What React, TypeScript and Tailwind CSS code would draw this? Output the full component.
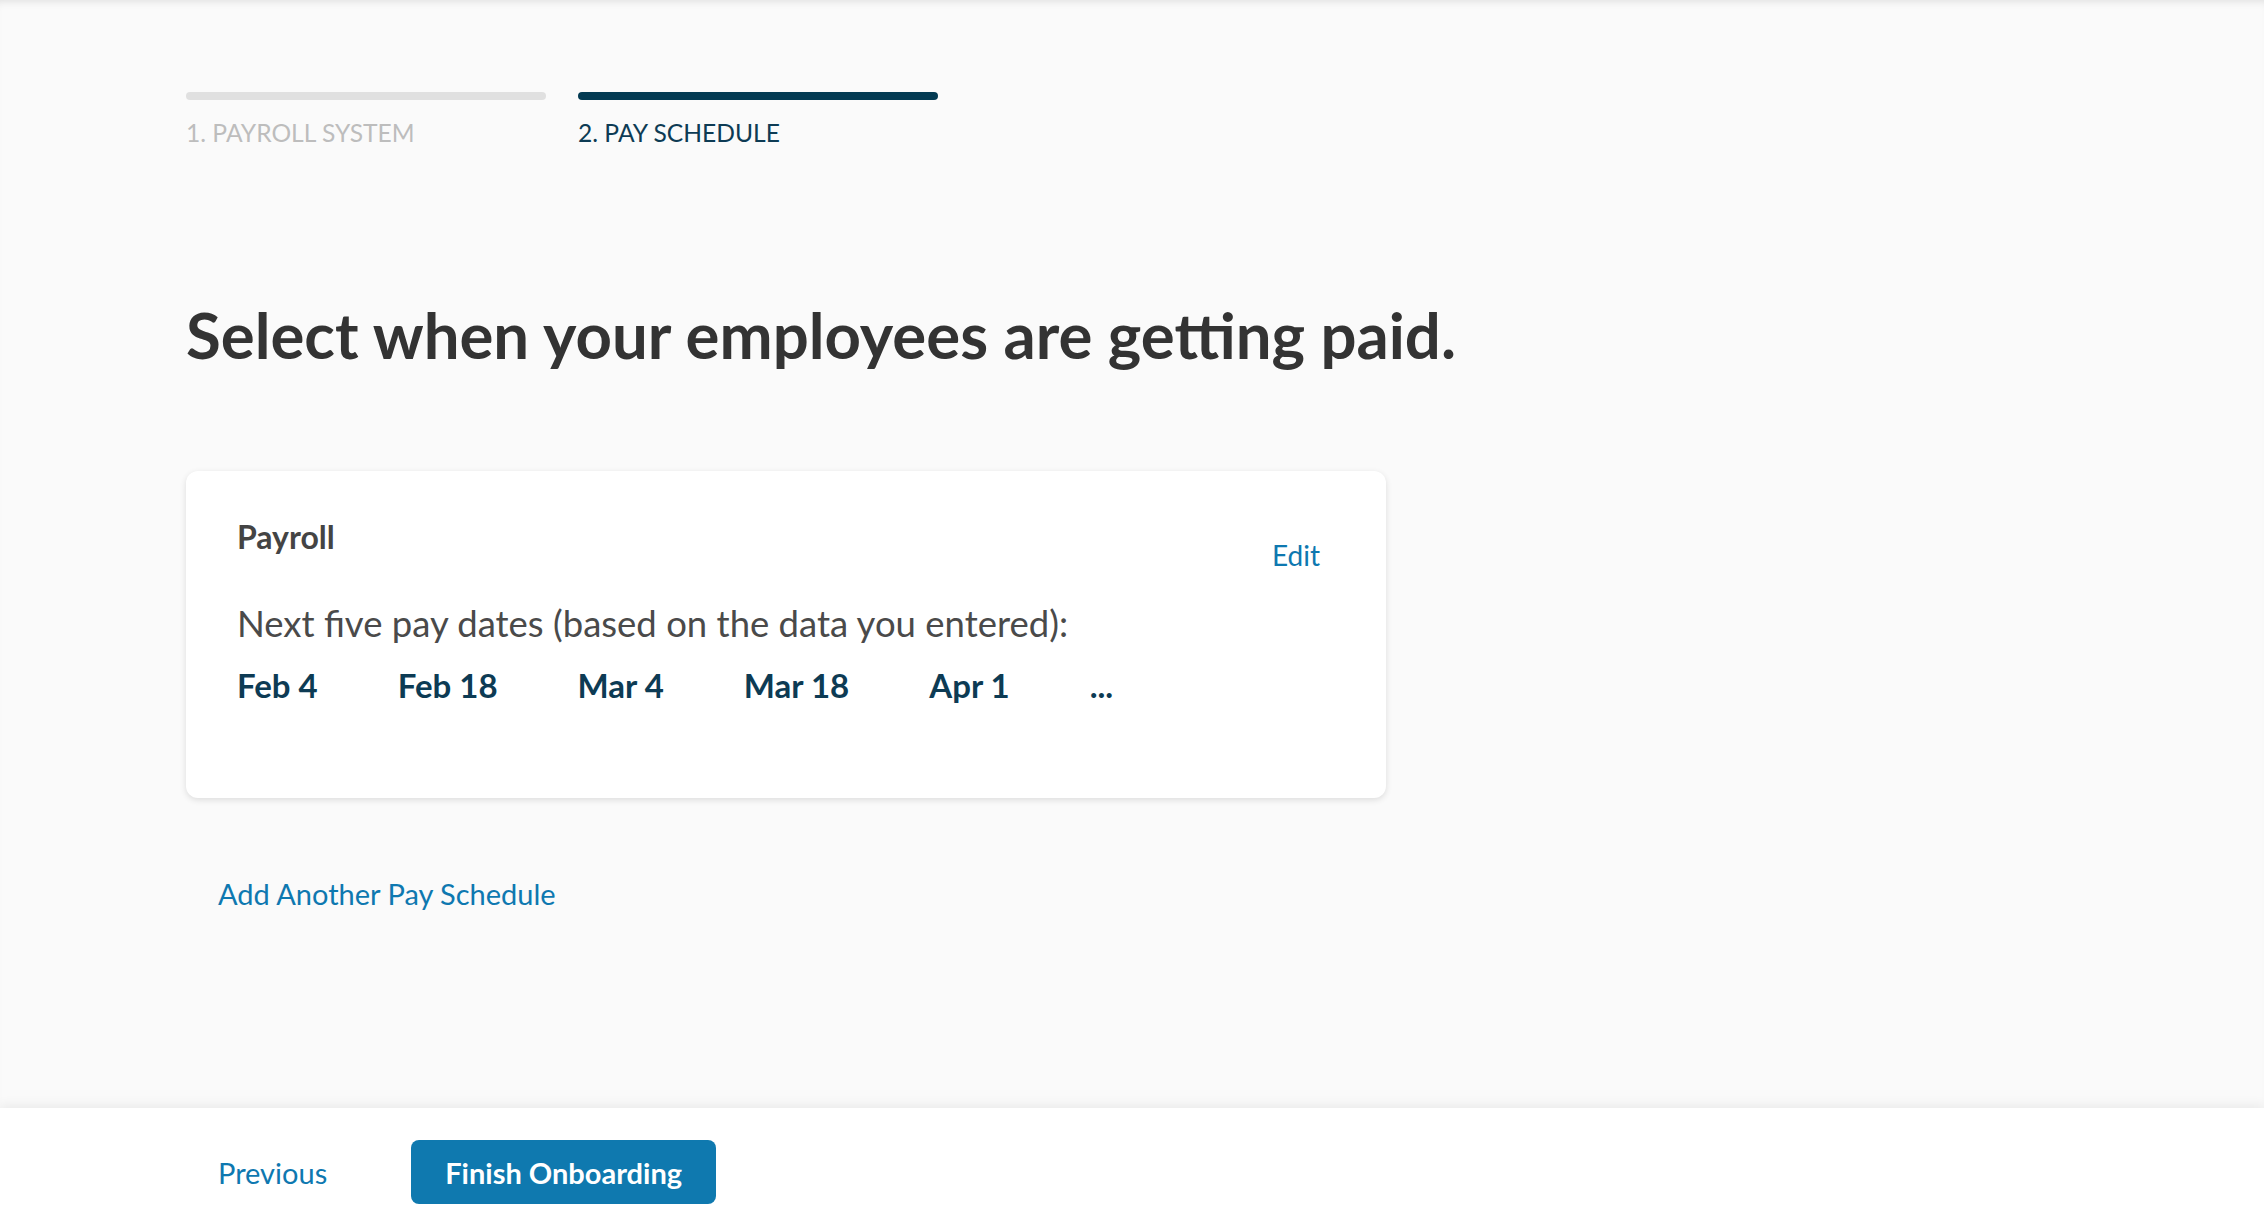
import React from 'react';

const dates = ['Feb 4', 'Feb 18', 'Mar 4', 'Mar 18', 'Apr 1', '...'];

function Steps() {
  return (
    <div className="flex gap-[32px]">
      <div className="w-[360px]">
        <div className="h-[8px] rounded-full bg-[#e0e0e0]" />
        <div className="mt-[21px] text-[24.6px] leading-none text-[#bdbdbd]">1. PAYROLL SYSTEM</div>
      </div>
      <div className="w-[360px]">
        <div className="h-[8px] rounded-full bg-[#033a52]" />
        <div className="mt-[21px] text-[24.6px] leading-none text-[#0d3b54]">2. PAY SCHEDULE</div>
      </div>
    </div>
  );
}

function PayrollCard() {
  return (
    <div className="w-[1200px] h-[327px] rounded-[12px] bg-white shadow-[0_2px_6px_rgba(0,0,0,0.12)] pl-[51px] pr-[66px] pt-[50px]">
      <div className="flex justify-between items-start">
        <div className="text-[32px] font-bold leading-none text-[#444444]">Payroll</div>
        <button className="mt-[20px] text-[28px] leading-none text-[#0e78b0]">Edit</button>
      </div>
      <div className="mt-[36px] text-[36.5px] leading-none text-[#4a4a4a]">
        Next five pay dates (based on the data you entered):
      </div>
      <div className="mt-[27px] flex gap-[80px]">
        {dates.map(d => (
          <span key={d} className="text-[33px] font-bold leading-none text-[#0d3b54]">{d}</span>
        ))}
      </div>
    </div>
  );
}

export default function App() {
  return (
    <div
      className="h-[1230px] flex flex-col bg-[#fafafa] text-[#333333] overflow-hidden"
      style={{ fontFamily: 'Lato, "Noto Sans", sans-serif' }}
    >
      <main className="flex-1 pl-[186px] pt-[92px] shadow-[inset_0_7px_8px_-6px_rgba(0,0,0,0.12)]">
        <Steps />
        <h1 className="mt-[157px] text-[63.5px] font-bold leading-none text-[#333333]">
          Select when your employees are getting paid.
        </h1>
        <div className="mt-[105px]">
          <PayrollCard />
        </div>
        <button className="mt-[81px] ml-[32px] text-[29px] leading-none text-[#0e78b0]">
          Add Another Pay Schedule
        </button>
      </main>
      <footer className="h-[122px] bg-white shadow-[0_-4px_10px_rgba(0,0,0,0.06)] flex items-start pt-[32px] pl-[218px] gap-[84px]">
        <button className="h-[64px] text-[29px] leading-none text-[#0e78b0]">Previous</button>
        <button className="h-[64px] px-[34px] rounded-[8px] bg-[#0f79af] text-white text-[29px] font-bold leading-none">
          Finish Onboarding
        </button>
      </footer>
    </div>
  );
}
